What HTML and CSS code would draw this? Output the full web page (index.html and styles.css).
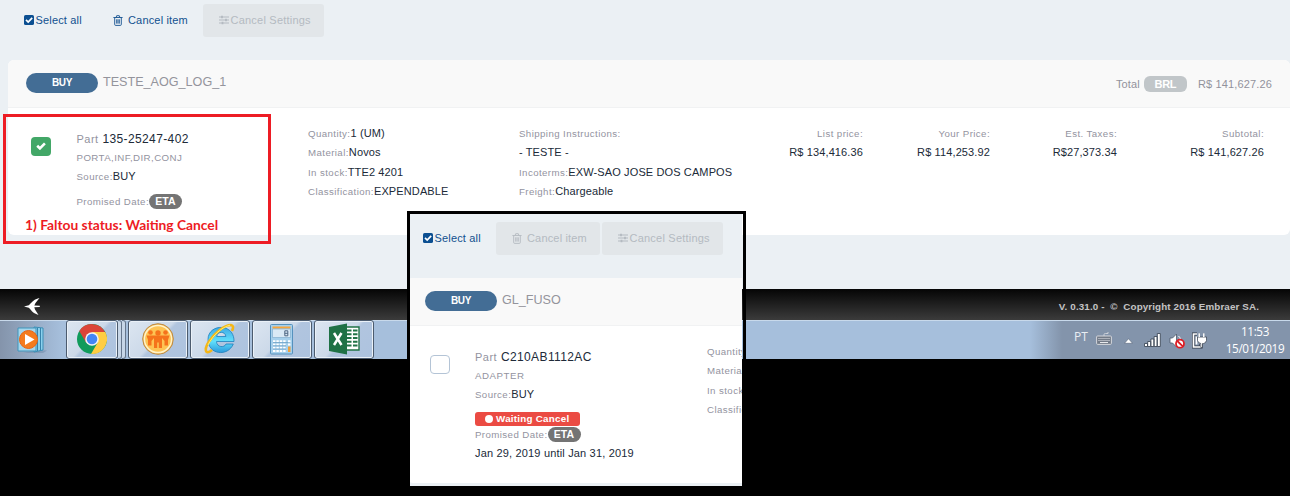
FILE: index.html
```html
<!DOCTYPE html>
<html lang="en">
<head>
<meta charset="utf-8">
<title>Orders</title>
<link rel="stylesheet" href="styles.css">
</head>
<body>
<svg class="defs" width="0" height="0">
  <symbol id="checked" viewBox="0 0 10 10"><rect width="10" height="10" rx="1.6" fill="#0b4f91"/><path d="M2 4.900l2.200 2.200 4-4.200" fill="none" stroke="#fff" stroke-width="1.700"/></symbol>
  <symbol id="trash" viewBox="0 0 10 11"><path d="M.4 2.5h9.2M3.2 2.3l.5-1.6h2.6l.5 1.6M1.7 2.8v6.7q0 .9.9.9h4.8q.9 0 .9-.9V2.8M3.7 4.3v4.3M5 4.3v4.3M6.3 4.3v4.3" fill="none" stroke="currentColor" stroke-width=".9"/></symbol>
  <symbol id="sliders" viewBox="0 0 10 10"><path d="M0 2h10M0 5h10M0 8h10" stroke="currentColor" stroke-width="1"/><path d="M3 .7v2.6M7 3.7v2.6M3.5 6.7v2.6" stroke="currentColor" stroke-width="1.8"/></symbol>
</svg>

<main class="page">
  <div class="toolbar">
    <div class="btn select"><svg class="ic"><use href="#checked"/></svg><span>Select all</span></div>
    <div class="btn cancel"><svg class="ic trash"><use href="#trash"/></svg><span>Cancel item</span></div>
    <div class="btn settings disabled"><svg class="ic"><use href="#sliders"/></svg><span>Cancel Settings</span></div>
  </div>
  <section class="card">
    <header class="card-head">
      <span class="pill">BUY</span><span class="name">TESTE_AOG_LOG_1</span>
      <div class="total"><span>Total</span><span class="cur">BRL</span><span>R$ 141,627.26</span></div>
    </header>
    <div class="card-body">
      <div class="check on"><svg width="10" height="8" viewBox="0 0 10 8"><path d="M1.2 3.8l2.7 2.6L8.9 1.4" fill="none" stroke="#fff" stroke-width="2.6"/></svg></div>
      <div class="part">
        <p class="part-no"><label>Part</label> <b>135-25247-402</b></p>
        <p><label class="desc">PORTA,INF,DIR,CONJ</label></p>
        <p><label>Source:</label><b>BUY</b></p>
        <p class="promised"><label>Promised Date:</label><span class="eta">ETA</span></p>
      </div>
      <div class="info">
        <p><label>Quantity:</label><b>1 (UM)</b></p>
        <p><label>Material:</label><b>Novos</b></p>
        <p><label>In stock:</label><b>TTE2 4201</b></p>
        <p><label>Classification:</label><b>EXPENDABLE</b></p>
      </div>
      <div class="info">
        <p><label>Shipping Instructions:</label></p>
        <p><b>- TESTE -</b></p>
        <p><label>Incoterms:</label><b>EXW-SAO JOSE DOS CAMPOS</b></p>
        <p><label>Freight:</label><b>Chargeable</b></p>
      </div>
      <div class="info price"><p><label>List price:</label></p><p><b>R$ 134,416.36</b></p></div>
      <div class="info price"><p><label>Your Price:</label></p><p><b>R$ 114,253.92</b></p></div>
      <div class="info price"><p><label>Est. Taxes:</label></p><p><b>R$27,373.34</b></p></div>
      <div class="info price"><p><label>Subtotal:</label></p><p><b>R$ 141,627.26</b></p></div>
    </div>
  </section>
</main>

<footer class="footer">
  <svg width="17" height="17" viewBox="0 0 17 17"><path d="M15.500 0Q10.500.8 6.500 5.500L4.800 7.300 0 8.400l4.800 1.300 1.700 1.900Q9.500 15.800 14.500 17L11 11.500 10.300 9.300 15.800 8.900V7.700L10.300 7.400 11.500 5z" fill="#fff"/></svg>
  <span>V. 0.31.0 -&nbsp; © &nbsp;Copyright 2016 Embraer SA.</span>
</footer>

<div class="taskbar">
  <div class="task plain">
    <svg width="32" height="28" viewBox="0 0 32 28"><path d="M21 24l9 .5-4 2.500H6z" fill="#6c87a8" opacity=".5"/><path d="M17 1l9 1v22l-9 2z" fill="#8bd1ee" stroke="#3a8db4"/><path d="M20.500 2v23M23.500 2v22" stroke="#3683ac"/><path d="M1 2h18v23H1z" fill="#a6d6ec" stroke="#3e95bb"/><circle cx="11.500" cy="13.500" r="9" fill="#f47b1d" stroke="#e86412"/><path d="M8 8v11l9.500-5.500z" fill="#fff"/></svg>
  </div>
  <div class="task app chrome">
    <svg width="30" height="30" viewBox="0 0 30 30"><circle cx="15" cy="15" r="15" fill="#109b5b"/><path d="M15 15L2.300 7A15 15 0 0 1 28.600 9z" fill="#db4438"/><path d="M2.300 7L9 18.500 15 15V8z" fill="#db4438"/><path d="M15 8h13.200A15 15 0 0 1 14 30l7-12z" fill="#ffcd42"/><circle cx="15" cy="15" r="6.800" fill="#f4f4f4"/><circle cx="15" cy="15" r="5.300" fill="#4386f5"/></svg>
  </div>
  <div class="stack"></div><div class="stack"></div>
  <div class="task app people">
    <svg width="32" height="32" viewBox="0 0 32 32"><circle cx="16" cy="16" r="15.300" fill="#f9b545" stroke="#b98a48"/><circle cx="16" cy="16" r="13.600" fill="#fdc454" stroke="#fff3c8" stroke-width="1.500"/><g fill="#f5731b"><circle cx="8.500" cy="9.500" r="2.300"/><circle cx="16" cy="10" r="2.700"/><circle cx="23.500" cy="9.500" r="2.300"/><path d="M4.500 12.500H27.500L26 17V22.500H22.500V18L20 15V25H16.800V19.500H15.200V25H12V15L9.500 18V22.500H6V17z"/></g></svg>
  </div>
  <div class="task app">
    <svg width="32" height="32" viewBox="0 0 32 32"><defs><linearGradient id="ie" x2="0" y2="1"><stop offset="0" stop-color="#3fa9e4"/><stop offset=".55" stop-color="#62e0fb"/><stop offset="1" stop-color="#2a99dc"/></linearGradient></defs><path d="M30 18.500H12.500c.3 6 8 6.500 9.500 2.500h7.300C24 34 4 32 4 16.500 4 .5 30.500-.5 30 18.500zM12.700 13.500h9.200c-.5-5.500-8.700-5.500-9.200 0z" fill="url(#ie)" stroke="#1f80bd" stroke-width=".8"/><path d="M8 27C1 33 0 26 5 18.500 11 9 21 2 27 2q3.500.5 1 6" fill="none" stroke="#f4b617" stroke-width="2.600"/><path d="M4 22C9 12 18 4 26 2.200" fill="none" stroke="#fff069" stroke-width="1"/></svg>
  </div>
  <div class="task app">
    <svg width="24" height="31" viewBox="0 0 24 31"><rect x=".5" y=".5" width="22" height="29.500" rx="1" fill="#a6d0ec" stroke="#5591bd"/><path d="M2.500 2.500h18v2h-18z" fill="#f7a53b"/><path d="M2.500 5h18v8.500h-18z" fill="#d9e9f5" stroke="#7aa8c9" stroke-width=".6"/><path d="M14.800 6.800h3v5h-3zM14.800 9.300h3" fill="none" stroke="#4d6682"/><path d="M3 17.300h13.500M3 20.500h13.500M3 23.700h13.500M3 26.900h13.500" stroke="#fff" stroke-width="2" stroke-dasharray="2.400 1"/><path d="M3 18.600h17M3 21.800h13M3 25h13" stroke="#5c93bd" stroke-width=".7"/><path d="M18 17.300h2.500M18 20.500h2.500" stroke="#fff" stroke-width="2"/><path d="M18 22.500h2.500v5.500H18z" fill="#f0a13b"/></svg>
  </div>
  <div class="task app">
    <svg width="32" height="32" viewBox="0 0 32 32"><path d="M18 4h13v23H18z" fill="#fff" stroke="#217346" stroke-width="1.400"/><path d="M19 7.500h4.500M25 7.500h4.500M19 11.200h4.500M25 11.200h4.500M19 15h4.500M25 15h4.500M19 18.700h4.500M25 18.700h4.500M19 22.500h4.500M25 22.500h4.500" stroke="#217346" stroke-width="2"/><path d="M1 4L19 .5v31L1 28z" fill="#1f7145"/><path d="M6 10l7.500 12M13.500 10L6 22" stroke="#fff" stroke-width="2.500"/></svg>
  </div>
  <div class="tray">
    <span class="lang">PT</span>
    <svg class="kb" width="16" height="13" viewBox="0 0 16 13"><path d="M8 4V2.500q0-1 1.500-1H12V0" fill="none" stroke="#cdd1d8"/><rect x=".6" y="4" width="14.800" height="8.400" rx="1" fill="#737b88" stroke="#d5d7dc"/><path d="M2.500 6.500h11M2.500 8.500h11" stroke="#e7e9ed" stroke-dasharray="1 1"/><path d="M4 10.500h8" stroke="#e7e9ed"/></svg>
    <svg class="up" width="9" height="6" viewBox="0 0 9 6"><path d="M.5 5.300L4.500.7l4 4.600z" fill="#fff" stroke="#59677c" stroke-width=".6"/></svg>
    <svg class="sig" width="17" height="14" viewBox="0 0 17 14"><g fill="#fff" stroke="#404b5a" stroke-width=".9"><path d="M.5 10.500h3v3h-3zM3.700 8.500h3v5h-3zM6.900 6h3v7.500h-3zM10.100 3.500h3v10h-3zM13.300.5h3v13h-3z"/></g></svg>
    <svg class="vol" width="17" height="16" viewBox="0 0 17 16"><path d="M1 5h2.500l4-4v13l-4-4H1z" fill="#fff" stroke="#4d5969" stroke-width=".8"/><path d="M9.500 3q2 1.500 2 4" fill="none" stroke="#fff"/><circle cx="11" cy="10.700" r="4" fill="#fff" stroke="#dd1d24" stroke-width="1.800"/><path d="M8.300 8l5.500 5.400" stroke="#dd1d24" stroke-width="1.800"/></svg>
    <svg class="pow" width="15" height="17" viewBox="0 0 15 17"><path d="M5 2H1.500v13H9v-3" fill="none" stroke="#303947" stroke-width="3.200"/><path d="M5 2H1.500v13H9v-3M4.500 4.500v8" fill="none" stroke="#fff" stroke-width="1.700"/><path d="M5.500 5h9v3.500q-1 3-3 3h-1v4h-1.700v-4q-2.800-.5-3.300-3zM7.200 5V1M11.800 5V1" fill="#fff" stroke="#303947" stroke-width=".7"/><path d="M7.200 5V1.200M11.800 5V1.200" stroke="#fff" stroke-width="1.500"/></svg>
    <div class="clock"><span>11:53</span><span>15/01/2019</span></div>
  </div>
</div>

<div class="note"><span>1) Faltou status: Waiting Cancel</span></div>

<div class="frame">
  <div class="inset">
    <div class="toolbar">
      <div class="btn select"><svg class="ic"><use href="#checked"/></svg><span>Select all</span></div>
      <div class="btn cancel disabled"><svg class="ic trash"><use href="#trash"/></svg><span>Cancel item</span></div>
      <div class="btn settings disabled"><svg class="ic"><use href="#sliders"/></svg><span>Cancel Settings</span></div>
    </div>
    <section class="card">
      <header class="card-head"><span class="pill">BUY</span><span class="name">GL_FUSO</span></header>
      <div class="card-body">
        <div class="check"></div>
        <div class="part">
          <p class="part-no"><label>Part</label> <b>C210AB1112AC</b></p>
          <p><label class="desc adapter">ADAPTER</label></p>
          <p><label>Source:</label><b>BUY</b></p>
          <p class="status"><i></i><span>Waiting Cancel</span></p>
          <p class="promised"><label>Promised Date:</label><span class="eta">ETA</span></p>
          <p class="dates"><b>Jan 29, 2019 until Jan 31, 2019</b></p>
        </div>
        <div class="info">
          <p><label>Quantity:</label></p>
          <p><label>Material:</label></p>
          <p><label>In stock:</label></p>
          <p><label>Classification:</label></p>
        </div>
      </div>
    </section>
  </div>
</div>
</body>
</html>
```
FILE: styles.css
```css
* { box-sizing: border-box; }
body { margin: 0; width: 1290px; height: 496px; overflow: hidden; position: relative; background: #000; font-family: "Liberation Sans", Arial, sans-serif; font-size: 11px; }
p { margin: 0; white-space: nowrap; }
b { font-weight: normal; }
svg { display: block; flex: none; }
.defs { position: absolute; }

.page { height: 289px; padding: 4px 0 0 8px; background: #ebf0f4; overflow: hidden; }
.toolbar { display: flex; height: 33px; margin-bottom: 23px; }
.btn { display: flex; align-items: center; height: 33px; padding-bottom: 1px; border-radius: 3px; color: #12508f; letter-spacing: .17px; white-space: nowrap; }
.ic { width: 10px; height: 10px; margin-right: 2px; }
.ic.trash { height: 11px; margin-right: 5px; }
.select { width: 89px; padding-left: 15.5px; }
.cancel { width: 104px; margin-right: 2px; padding-left: 16px; }
.settings { width: 121px; padding-left: 15.5px; letter-spacing: .22px; }
.disabled { background: #e2e6e9; color: #b4bac1; }

.card { height: 175px; border-radius: 6px; background: #fff; overflow: hidden; }
.card-head { display: flex; height: 48px; padding-left: 18px; background: #f9f9f9; border-bottom: 1px solid #f1f2f3; }
.pill { width: 72px; height: 20px; margin: 13px 5px 0 0; border-radius: 10px; background: #436d95; color: #fff; font-size: 10px; font-weight: bold; line-height: 20px; text-align: center; letter-spacing: -.3px; }
.name { line-height: 44px; font-size: 12.6px; color: #94949c; }
.total { display: flex; align-items: center; margin: 0 18px 0 auto; color: #92929c; letter-spacing: .15px; }
.cur { width: 43px; height: 16px; margin: 0 11px 0 4px; border-radius: 6px; background: #c1c6c9; color: #fff; font-weight: bold; line-height: 16px; text-align: center; letter-spacing: -.3px; }

.card-body { display: grid; grid-template-columns: 68.5px 231.5px 211px 218px 126px 127px 127px 147px; color: #202a38; letter-spacing: .12px; }
.check { width: 20px; height: 19px; margin: 29px 0 0 23px; border: 1px solid #b4c4d6; border-radius: 4px; background: #fff; }
.check.on { display: flex; align-items: center; justify-content: center; padding-bottom: 1px; border: 0; background: #42a767; }
label { color: #9393a0; font-size: 9.7px; letter-spacing: .41px; }
.part { padding-top: 22px; }
.part p { height: 19px; line-height: 19px; }
.part .part-no { font-size: 12px; letter-spacing: .38px; height: 18px; }
.part-no label { font-size: 11px; letter-spacing: .5px; }
.part .promised { display: flex; margin-top: 6px; }
.part .desc { letter-spacing: .42px; }
.part .adapter { letter-spacing: .56px; }
.eta { width: 33px; height: 15px; margin-top: 2px; border-radius: 8px; background: #747474; color: #fff; font-size: 10.5px; font-weight: bold; line-height: 15px; text-align: center; }
.info { padding-top: 16px; }
.info p { height: 19.4px; line-height: 19px; }
.price { text-align: right; }

.footer { display: flex; align-items: center; justify-content: space-between; height: 31px; padding: 4px 31px 0 24px; background: linear-gradient(#050505, #3b3b3b); color: #c4c4c4; font-size: 9.8px; font-weight: bold; letter-spacing: .13px; }

.taskbar { display: flex; height: 39px; border-top: 1px solid #c8d9eb; background: linear-gradient(90deg, #8494ab 0, #a6bfdc 62px, #a6bfdc 1030px, #8394ab 1062px); }
.task { display: flex; align-items: center; justify-content: center; }
.plain { width: 66px; }
.app { width: 60px; height: 39px; margin: -1px 2px 0 0; padding-bottom: 1px; border: 1px solid #4c5b6e; border-radius: 3px; background: linear-gradient(135deg, #dce6f1 0, #ccd9e9 48%, #b1c5df 53%, #adc3df); box-shadow: inset 0 0 0 1px #eaf1f8; }
.chrome { width: 52px; margin-right: 0; }
.stack { width: 4px; height: 39px; margin-top: -1px; border: solid #66768b; border-width: 1px 1px 1px 0; border-radius: 0 3px 3px 0; background: #c7d6e7; }
.people { margin-left: 2px; }
.tray { display: flex; margin-left: auto; color: #fff; font-family: "Open Sans", "Noto Sans", sans-serif; font-size: 12px; }
.lang { width: 22px; margin-top: 8px; line-height: 16px; font-size: 12px; color: #e9edf3; }
.kb { margin: 11px 12px 0 0; }
.up { margin: 17px 11px 0 0; }
.sig { margin: 12px 8px 0 0; }
.vol { margin: 12px 6px 0 0; }
.pow { margin: 11px 17px 0 0; }
.clock { display: flex; flex-direction: column; align-items: center; width: 62px; margin-right: 4px; padding-top: 2px; line-height: 17px; font-size: 11.7px; letter-spacing: -.35px; }

.note { position: absolute; left: 3px; top: 114px; width: 268px; height: 130px; border: 3px solid #ed1c24; padding: 99px 0 0 19px; color: #ed1c24; font: bold 13.8px/18px Lato, sans-serif; white-space: nowrap; }

.frame { position: absolute; left: 407px; top: 211px; width: 339px; height: 285px; border: 3px solid #000; border-bottom: 0; }
.inset { width: 332px; height: 272px; padding-top: 8px; background: #ebf0f4; overflow: hidden; }
.inset .toolbar { margin-left: -3px; }
.inset .card { width: 1282px; height: 205px; margin-left: -3px; }
.inset .card-body { grid-template-columns: 68px 232px 211px; }
.inset .part .status { display: flex; align-items: center; width: 105px; height: 14px; margin-top: 8px; padding-left: 10px; border-radius: 3px; background: #eb4b43; color: #fff; font-size: 9.8px; font-weight: bold; letter-spacing: .25px; line-height: 14px; }
.status i { width: 8px; height: 8px; margin-right: 3px; border-radius: 50%; background: #fff; }
.inset .part .promised { margin-top: -1px; }
.dates { letter-spacing: .17px; }
```
